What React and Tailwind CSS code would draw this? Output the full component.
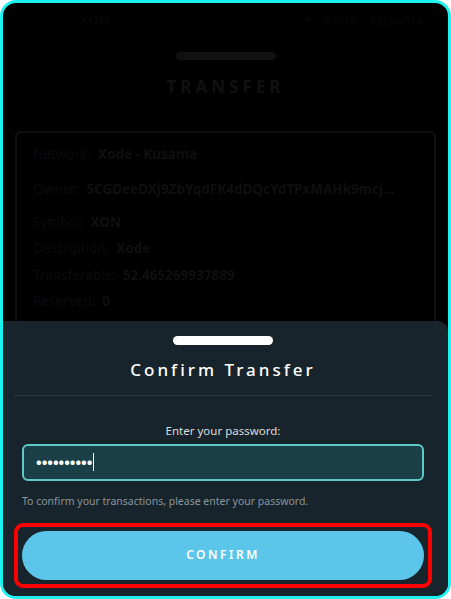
import React from 'react';

const font = { fontFamily: '"Noto Sans", "Open Sans", sans-serif' };

const Row = ({ label, value, className = '' }) => (
  <div className={`flex items-center gap-[7px] text-[13.5px] ${className}`}>
    <span className="text-[#0b0b0b]">{label}</span>
    <span className="font-bold text-[#0f0f0f] truncate">{value}</span>
  </div>
);

export default function App() {
  return (
    <div
      className="relative w-[451px] h-[599px] overflow-hidden rounded-[16px] border-[3px] border-[#1cf2ef] bg-black"
      style={font}
    >
      {/* dimmed screen behind the sheet */}
      <div className="flex flex-col">
        <div className="flex h-[30px] items-center justify-between pl-[16px] pr-[24px] pt-[2px] text-[14px] font-semibold text-[#060606]">
          <div className="flex items-center gap-[46px]">
            <span>←</span>
            <span>XON</span>
          </div>
          <div className="flex items-center gap-[12px]">
            <span className="h-[6px] w-[6px] rounded-full bg-[#060606]" />
            <span>Xode - Kusama</span>
          </div>
        </div>
        <div className="mx-auto mt-[19px] h-[8px] w-[100px] rounded-full bg-[#101010]" />
        <div className="mt-[14px] text-center text-[17px] font-bold tracking-[4px] text-[#101010]">
          TRANSFER
        </div>
        <div className="mx-[12px] mt-[31px] h-[220px] rounded-[6px] border-[2px] border-[#101010] px-[16px] pt-[11px]">
          <Row label="Network:" value="Xode - Kusama" />
          <Row className="mt-[15px]" label="Owner:" value="5CGDeeDXj9ZbYqdFK4dDQcYdTPxMAHk9mcj..." />
          <Row className="mt-[13px]" label="Symbol:" value="XON" />
          <Row className="mt-[6px]" label="Description:" value="Xode" />
          <Row className="mt-[6px]" label="Transferable:" value="52.465269937889" />
          <Row className="mt-[6px]" label="Reserved:" value="0" />
        </div>
      </div>

      {/* bottom sheet */}
      <div className="absolute inset-x-0 bottom-0 top-[318px] flex flex-col rounded-tr-[10px] bg-[#17242b] pl-[11px] pr-[16px]">
        <div className="mx-auto mt-[15px] h-[9px] w-[100px] rounded-full bg-white" />
        <div className="mt-[12px] text-center text-[17px] font-medium tracking-[3px] text-white">
          Confirm Transfer
        </div>
        <div className="mt-[12px] h-px bg-[#2c3b42]" />
        <div className="mt-[26px] text-center text-[11.5px] text-[#dddddd]">Enter your password:</div>
        <div className="mt-[5px] px-[8px]">
          <div className="flex h-[37px] items-center rounded-[6px] border-[2px] border-[#5ec9c8] bg-[#1a3f47] px-[12px]">
            <span className="text-[15px] font-bold leading-none text-white">••••••••••</span>
            <span className="ml-[1px] h-[18px] w-px bg-white" />
          </div>
        </div>
        <div className="mt-[13px] pl-[8px] text-[10.5px] text-[#8a959b]">
          To confirm your transactions, please enter your password.
        </div>
        <div className="mt-[13px] rounded-[9px] border-[4px] border-[#ff0000] px-[4px] py-[4px]">
          <button className="flex h-[49px] w-full items-center justify-center rounded-full bg-[#5bc6ea] text-[12px] font-semibold tracking-[2.5px] text-white">
            CONFIRM
          </button>
        </div>
      </div>
    </div>
  );
}
